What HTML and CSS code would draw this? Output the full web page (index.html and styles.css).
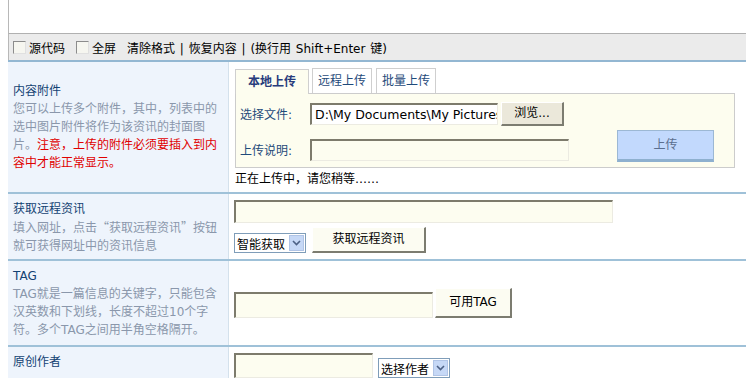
FILE: index.html
```html
<!DOCTYPE html>
<html lang="zh-CN">
<head>
    <meta charset="UTF-8">
    <title>发布资讯</title>
    <link rel="stylesheet" href="styles.css">
</head>
<body>
    <!-- editor tail -->
    <div class="editor">
        <div class="editor-area"></div>
        <div class="editor-bar">
            <span class="check"></span><span class="bar-label">源代码</span>
            <span class="check"></span><span class="bar-label">全屏</span>
            <span class="bar-links">清除格式 | 恢复内容 | (换行用 Shift+Enter 键)</span>
        </div>
    </div>

    <div class="form">
        <div class="row row-attach">
            <div class="row-head">
                <div class="label">内容附件</div>
                <div class="hint">您可以上传多个附件，其中，列表中的选中图片附件将作为该资讯的封面图片。<span class="warn">注意，上传的附件必须要插入到内容中才能正常显示。</span></div>
            </div>
            <div class="row-body cell-top">
                <div class="tabs">
                    <span class="tab active">本地上传</span>
                    <span class="tab">远程上传</span>
                    <span class="tab">批量上传</span>
                </div>
                <div class="panel">
                    <div class="panel-fields">
                        <div class="field">
                            <span class="field-label">选择文件:</span>
                            <span class="input file-path">D:\My Documents\My Pictures</span>
                            <span class="btn btn-grey">浏览...</span>
                        </div>
                        <div class="field">
                            <span class="field-label">上传说明:</span>
                            <span class="input desc-input"></span>
                        </div>
                    </div>
                    <span class="btn-upload">上传</span>
                </div>
                <div class="status">正在上传中，请您稍等……</div>
            </div>
        </div>
        <div class="row row-remote">
            <div class="row-head">
                <div class="label">获取远程资讯</div>
                <div class="hint cjk">填入网址，点击“获取远程资讯”按钮就可获得网址中的资讯信息</div>
            </div>
            <div class="row-body">
                <span class="input url-input"></span>
                <div class="line">
                    <span class="select">智能获取<span class="arrow"><svg width="9" height="6" viewBox="0 0 9 6"><path d="M1 1 L4.5 4.5 L8 1" fill="none" stroke="#4d6185" stroke-width="1.6"/></svg></span></span>
                    <span class="btn btn-cream fetch-btn">获取远程资讯</span>
                </div>
            </div>
        </div>
        <div class="row row-tag">
            <div class="row-head">
                <div class="label">TAG</div>
                <div class="hint">TAG就是一篇信息的关键字，只能包含汉英数和下划线，长度不超过10个字符。多个TAG之间用半角空格隔开。</div>
            </div>
            <div class="row-body">
                <div class="line">
                    <span class="input tag-input"></span>
                    <span class="btn btn-cream tag-btn">可用TAG</span>
                </div>
            </div>
        </div>
        <div class="row row-author">
            <div class="row-head">
                <div class="label">原创作者</div>
            </div>
            <div class="row-body">
                <div class="line">
                    <span class="input author-input"></span>
                    <span class="select">选择作者<span class="arrow"><svg width="9" height="6" viewBox="0 0 9 6"><path d="M1 1 L4.5 4.5 L8 1" fill="none" stroke="#4d6185" stroke-width="1.6"/></svg></span></span>
                </div>
            </div>
        </div>
    </div>
</body>
</html>
```

FILE: styles.css
```css
body {
    margin: 0;
    font-family: "DejaVu Sans", "Noto Sans CJK SC", sans-serif;
    font-size: 12px;
    color: #000;
    background: #fff;
    overflow: hidden;
}

.cjk {
    font-family: "Noto Sans CJK SC", sans-serif;
}

.editor {
    margin-left: 8px;
}

.editor-area {
    height: 33px;
    border-left: 1px solid #b8b8b8;
    background: #fff;
}

.editor-bar {
    height: 26px;
    border-top: 1px solid #b0b0b0;
    border-left: 1px solid #b8b8b8;
    background: #ebebeb;
    display: flex;
    align-items: center;
    padding-left: 4px;
    white-space: nowrap;
}

.check {
    width: 11px;
    height: 11px;
    border: 1px solid #8c8c8c;
    border-right-color: #e0e0e0;
    border-bottom-color: #e0e0e0;
    background: #f6f6f0;
    margin-right: 3px;
}

.bar-label {
    margin-right: 11px;
}

.bar-links {
    word-spacing: 1px;
}

.form {
    margin-left: 8px;
    border-top: 2px solid #93b7d2;
}

.row {
    display: grid;
    grid-template-columns: 221px 1fr;
    border-top: 2px solid #9fc1d8;
}

.row:first-child {
    border-top: none;
}

.row-head {
    background: #eef4fc;
    border-right: 1px solid #d4e1ec;
    padding-left: 5px;
    padding-right: 6px;
    line-height: 18px;
    display: flex;
    flex-direction: column;
    justify-content: center;
}

.row-body {
    padding-left: 5px;
    display: flex;
    flex-direction: column;
    justify-content: center;
    min-width: 0;
}

.label {
    color: #134273;
}

.hint {
    color: #8a97ab;
}

.warn {
    color: #e00000;
}

.row-attach { height: 130px; }
.row-remote { height: 65px; }
.row-tag { height: 84px; }
.row-author { height: 40px; }

.row-body.cell-top {
    justify-content: flex-start;
    padding-top: 6px;
    padding-left: 6px;
}

.tabs {
    display: flex;
    gap: 4px;
    height: 25px;
}

.tab {
    border: 1px solid #cfcfcf;
    border-bottom: none;
    padding: 0 5px;
    line-height: 24px;
    color: #1f4a7a;
    background: #fff;
}

.tab.active {
    background: #fdfdef;
    font-weight: bold;
    color: #283c7c;
    padding: 0 12px;
    margin-right: -1px;
    position: relative;
    top: 1px;
}

.panel {
    margin-right: 11px;
    height: 73px;
    border: 1px solid #cccccc;
    background: #fdfdef;
    display: flex;
    padding-left: 4px;
}

.panel-fields {
    padding-top: 8px;
    width: 373px;
}

.field {
    display: flex;
    align-items: center;
    height: 23px;
    margin-bottom: 13px;
}

.field-label {
    width: 70px;
    color: #1f4a7a;
}

.input {
    box-sizing: border-box;
    display: inline-block;
    height: 22px;
    border: 2px solid #7d7b6c;
    border-right: 1px solid #ecebe2;
    border-bottom: 1px solid #ecebe2;
    background: #fdfdf0;
    overflow: hidden;
    white-space: nowrap;
    flex-shrink: 0;
}

.file-path {
    width: 188px;
    padding: 1px 0 0 3px;
    font-size: 12.5px;
    line-height: 17px;
    background: #fff;
}

.desc-input {
    width: 259px;
}

.btn {
    box-sizing: border-box;
    display: inline-block;
    text-align: center;
    border: 1px solid #fff;
    border-right: 2px solid #7c7c70;
    border-bottom: 2px solid #7c7c70;
    flex-shrink: 0;
}

.btn-grey {
    width: 63px;
    height: 24px;
    line-height: 20px;
    margin-left: 3px;
    background: #ebe8da;
}

.btn-upload {
    box-sizing: border-box;
    align-self: flex-end;
    margin: 0 0 5px 4px;
    width: 97px;
    height: 32px;
    line-height: 28px;
    text-align: center;
    background: #c2d9fd;
    border: 1px solid #9cb8d4;
    border-bottom: 3px solid #8eb0cf;
    color: #5a6e8e;
    flex-shrink: 0;
}

.status {
    padding-top: 4px;
    line-height: 14px;
}

.line {
    display: flex;
    align-items: center;
}

.url-input {
    width: 379px;
    height: 23px;
    margin-bottom: 4px;
}

.select {
    box-sizing: border-box;
    display: inline-flex;
    align-items: center;
    height: 20px;
    border: 1px solid #7f9db9;
    background: #fff;
    padding-left: 2px;
    gap: 4px;
    flex-shrink: 0;
}

.arrow {
    width: 15px;
    height: 16px;
    margin-right: 1px;
    background: #c6d8f6;
    border: 1px solid #b0c4e6;
    box-sizing: border-box;
    display: flex;
    align-items: center;
    justify-content: center;
}

.row-remote .select {
    align-self: flex-end;
}

.fetch-btn {
    width: 114px;
    height: 26px;
    line-height: 22px;
    margin-left: 6px;
}

.btn-cream {
    background: #fcfcf2;
}

.tag-input {
    width: 199px;
    height: 26px;
    align-self: flex-end;
}

.tag-btn {
    width: 77px;
    height: 30px;
    line-height: 26px;
    margin-left: 2px;
    align-self: flex-start;
}

.row-author .row-head,
.row-author .row-body {
    justify-content: flex-start;
    padding-top: 6px;
}

.author-input {
    width: 139px;
    height: 25px;
}

.row-author .select {
    margin-left: 5px;
    align-self: flex-end;
}
```
